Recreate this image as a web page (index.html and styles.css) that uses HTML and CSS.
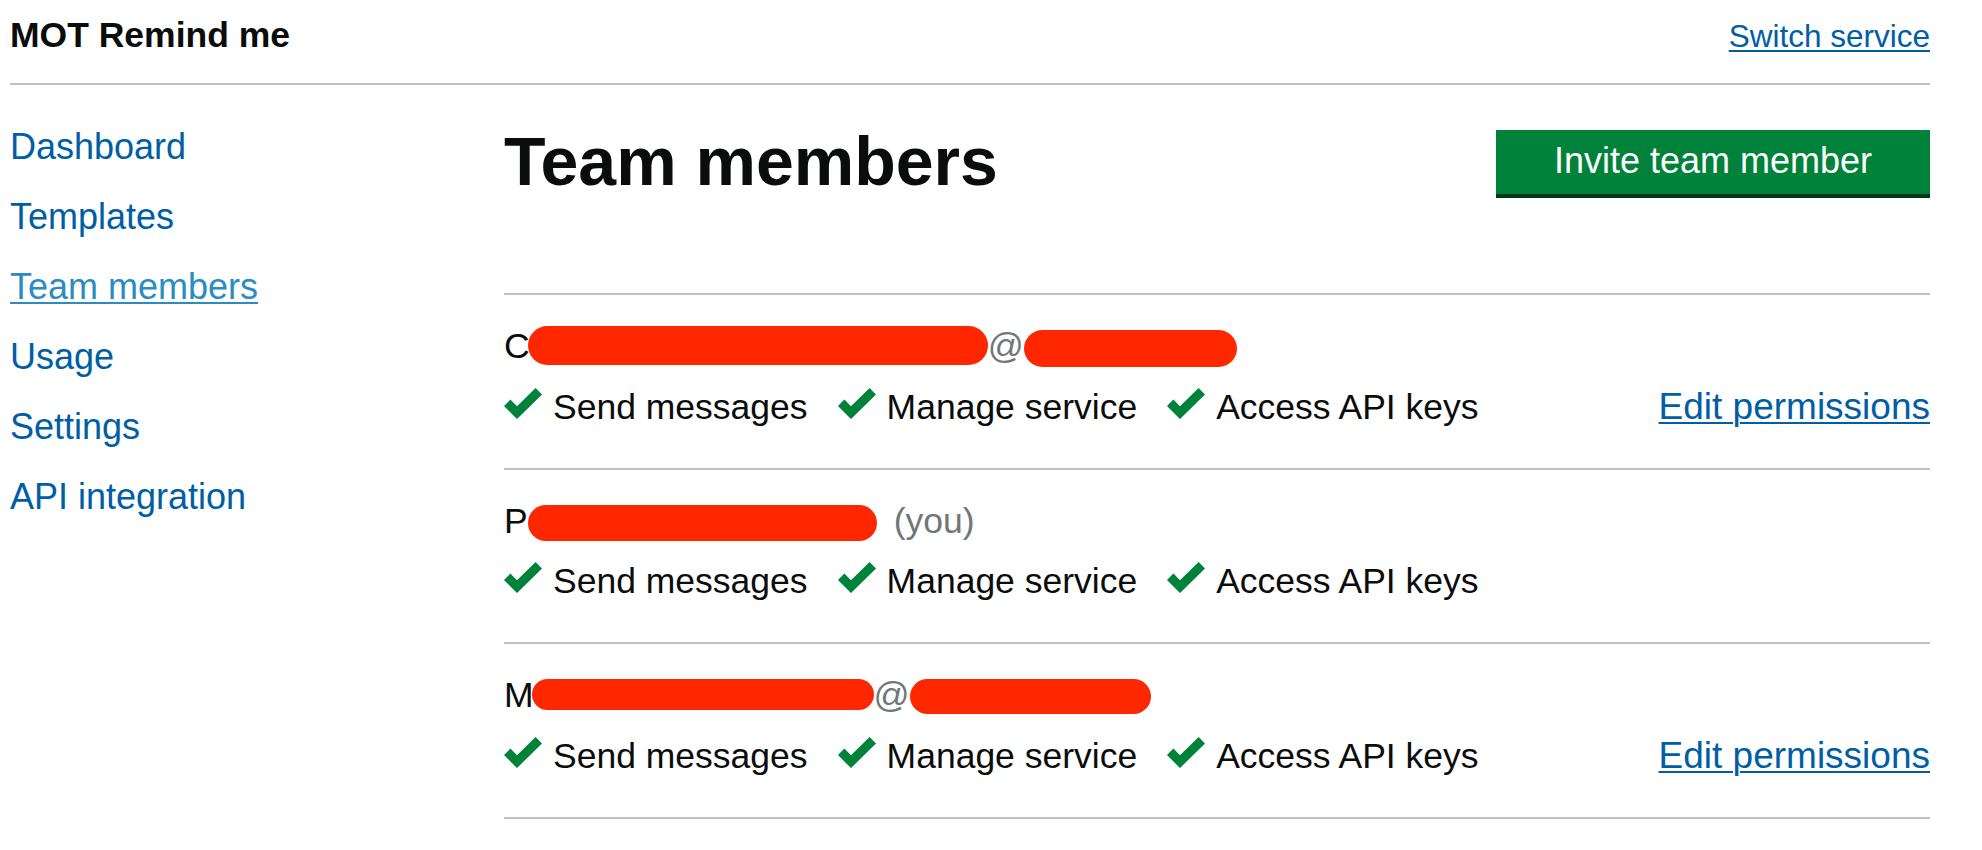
FILE: index.html
```html
<!DOCTYPE html>
<html lang="en">
<head>
<meta charset="utf-8">
<title>Team members – MOT Remind me</title>
<link rel="stylesheet" href="styles.css">
</head>
<body>
<div class="page">
  <header class="site-header">
    <span class="service-name">MOT Remind me</span>
    <a class="switch-link" href="#">Switch service</a>
  </header>
  <div class="layout">
    <nav class="side-nav">
      <ul class="nav-list">
        <li><a class="nav-link" href="#">Dashboard</a></li>
        <li><a class="nav-link" href="#">Templates</a></li>
        <li><a class="nav-link is-active" href="#">Team members</a></li>
        <li><a class="nav-link" href="#">Usage</a></li>
        <li><a class="nav-link" href="#">Settings</a></li>
        <li><a class="nav-link" href="#">API integration</a></li>
      </ul>
    </nav>
    <main class="main">
      <div class="page-head">
        <h1 class="heading">Team members</h1>
        <a class="button" href="#">Invite team member</a>
      </div>
      <div class="team-list">
        <div class="member">
          <div class="member-name">C<span class="redact r1a"></span><span class="at">@</span><span class="redact r1b"></span></div>
          <div class="member-perms">
            <ul class="perms">
              <li class="perm"><svg class="tick" viewBox="0 0 38 31"><polygon points="13,31 0,18 6.4,11.6 13,18.3 31.6,0 38,6.4"/></svg>Send messages</li>
              <li class="perm"><svg class="tick" viewBox="0 0 38 31"><polygon points="13,31 0,18 6.4,11.6 13,18.3 31.6,0 38,6.4"/></svg>Manage service</li>
              <li class="perm"><svg class="tick" viewBox="0 0 38 31"><polygon points="13,31 0,18 6.4,11.6 13,18.3 31.6,0 38,6.4"/></svg>Access API keys</li>
            </ul>
            <a class="edit-link" href="#">Edit permissions</a>
          </div>
        </div>
        <div class="member">
          <div class="member-name">P<span class="redact r2"></span><span class="you">(you)</span></div>
          <div class="member-perms">
            <ul class="perms">
              <li class="perm"><svg class="tick" viewBox="0 0 38 31"><polygon points="13,31 0,18 6.4,11.6 13,18.3 31.6,0 38,6.4"/></svg>Send messages</li>
              <li class="perm"><svg class="tick" viewBox="0 0 38 31"><polygon points="13,31 0,18 6.4,11.6 13,18.3 31.6,0 38,6.4"/></svg>Manage service</li>
              <li class="perm"><svg class="tick" viewBox="0 0 38 31"><polygon points="13,31 0,18 6.4,11.6 13,18.3 31.6,0 38,6.4"/></svg>Access API keys</li>
            </ul>
          </div>
        </div>
        <div class="member">
          <div class="member-name">M<span class="redact r3a"></span><span class="at">@</span><span class="redact r3b"></span></div>
          <div class="member-perms">
            <ul class="perms">
              <li class="perm"><svg class="tick" viewBox="0 0 38 31"><polygon points="13,31 0,18 6.4,11.6 13,18.3 31.6,0 38,6.4"/></svg>Send messages</li>
              <li class="perm"><svg class="tick" viewBox="0 0 38 31"><polygon points="13,31 0,18 6.4,11.6 13,18.3 31.6,0 38,6.4"/></svg>Manage service</li>
              <li class="perm"><svg class="tick" viewBox="0 0 38 31"><polygon points="13,31 0,18 6.4,11.6 13,18.3 31.6,0 38,6.4"/></svg>Access API keys</li>
            </ul>
            <a class="edit-link" href="#">Edit permissions</a>
          </div>
        </div>
      </div>
    </main>
  </div>
</div>
</body>
</html>
```
FILE: styles.css
```css
html, body {
  margin: 0;
  padding: 0;
  background: #ffffff;
}

body {
  font-family: "Liberation Sans", Arial, sans-serif;
  color: #0b0c0c;
}

.page {
  width: 1920px;
  margin-left: 10px;
}

/* Header */
.site-header {
  display: flex;
  justify-content: space-between;
  align-items: baseline;
  padding: 15px 0 27px;
  font-size: 35px;
  line-height: 40px;
  border-bottom: 2px solid #bfc1c3;
}

.service-name {
  font-size: 35.5px;
  font-weight: 700;
}

.switch-link {
  font-size: 31.5px;
  color: #005ea5;
  text-decoration: underline;
  text-decoration-thickness: 2px;
  text-underline-offset: 3px;
}

/* Layout */
.layout {
  display: grid;
  grid-template-columns: 494px 1fr;
  padding-top: 27px;
}

.nav-list {
  list-style: none;
  margin: 0;
  padding: 0;
}

.nav-list li {
  font-size: 36px;
  line-height: 70px;
}

.nav-link {
  color: #005ea5;
  text-decoration: none;
}

.nav-link.is-active {
  color: #2b8cc4;
  text-decoration: underline;
  text-decoration-thickness: 2px;
  text-underline-offset: 3px;
}

/* Main */
.page-head {
  display: flex;
  justify-content: space-between;
  align-items: flex-start;
}

.heading {
  margin: 9px 0 0;
  font-size: 68px;
  line-height: 80px;
  font-weight: 700;
  letter-spacing: 0;
}

.button {
  box-sizing: border-box;
  width: 434px;
  margin-top: 18px;
  padding: 11px 0 13px;
  font-size: 36px;
  line-height: 40px;
  text-align: center;
  color: #ffffff;
  background: #00823b;
  box-shadow: 0 4px 0 #003618;
  text-decoration: none;
}

.team-list {
  margin-top: 92px;
  border-bottom: 2px solid #bfc1c3;
}

.member {
  border-top: 2px solid #bfc1c3;
  padding: 29px 0 38px;
}

.member-name {
  font-size: 35.5px;
  line-height: 45px;
  white-space: nowrap;
}

.redact {
  display: inline-block;
  background: #ff2700;
  border-radius: 20px;
}

.r1a { width: 460px; height: 39px; margin-left: -2px; vertical-align: -7px; }
.r1b { width: 213px; height: 37px; vertical-align: -9px; }
.r2  { width: 349px; height: 36px; vertical-align: -8px; }
.r3a { width: 342px; height: 31px; margin-left: -2px; vertical-align: -3px; }
.r3b { width: 241px; height: 35px; vertical-align: -7px; }

.at {
  color: #6f777b;
}

.you {
  color: #6f777b;
  margin-left: 17px;
}

.member-perms {
  display: flex;
  justify-content: space-between;
  align-items: baseline;
  margin-top: 15px;
  font-size: 35.5px;
  line-height: 45px;
}

.perms {
  display: flex;
  align-items: baseline;
  gap: 30px;
  list-style: none;
  margin: 0;
  padding: 0;
  white-space: nowrap;
}

.tick {
  width: 38px;
  height: 31px;
  margin-right: 11px;
  vertical-align: 0;
  fill: #00823b;
}

.edit-link {
  font-size: 37px;
  color: #005ea5;
  text-decoration: underline;
  text-decoration-thickness: 2px;
  text-underline-offset: 3px;
}
```
